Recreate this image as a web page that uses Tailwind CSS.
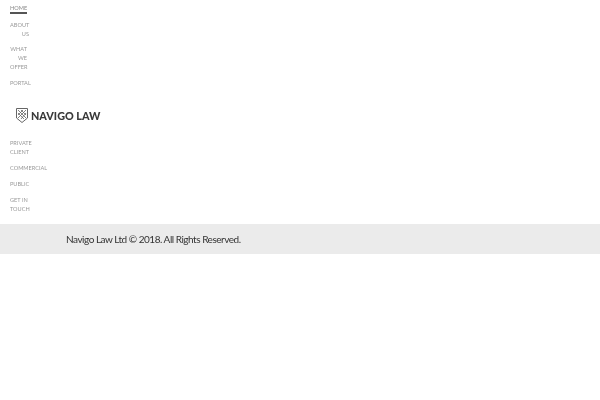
<!DOCTYPE html>
<html lang="en">
<head>
  <meta charset="UTF-8" />
  <title>Navigo Law</title>
  <script src="https://cdn.jsdelivr.net/npm/@tailwindcss/browser@4"></script>
</head>
<body class="bg-white font-['Lato',sans-serif]">
  <header class="pl-[10px] pt-[4px] [will-change:transform]">
    <ul class="flex flex-col gap-[6px] text-[5.6px] leading-[9px] text-[#999]">
      <li class="w-[17px]"><a class="block border-b-2 border-[#555] leading-[8px] text-[#888]">HOME</a></li>
      <li class="w-[19px] text-right">ABOUT<br />US</li>
      <li class="w-[17px] text-right">WHAT<br />WE<br />OFFER</li>
      <li class="mt-[1px]">PORTAL</li>
    </ul>
    <div class="flex items-center gap-[3px] ml-[6px] mt-[21px]">
      <svg width="12" height="15" viewBox="0 0 12 15" fill="none" stroke="#666">
        <path d="M.5.5h11v9.5l-5.5 4.5L.5 10z" />
        <path d="M2 2l8 8M5 2l5 5M2 5l6 6M10 2l-8 8M7 2l-5 5M10 5l-5 6" stroke-width=".8" />
      </svg>
      <span class="text-[10.8px] leading-[15px] font-black text-[#3a3a3a]">NAVIGO LAW</span>
    </div>
    <ul class="flex flex-col gap-[7px] mt-[15px] text-[5.6px] leading-[9px] text-[#999]">
      <li>PRIVATE<br />CLIENT</li>
      <li>COMMERCIAL</li>
      <li>PUBLIC</li>
      <li>GET IN<br />TOUCH</li>
    </ul>
  </header>
  <footer class="mt-[11px] h-[30px] bg-[#ebebeb] pl-[66px] pt-[1px] flex items-center">
    <p class="text-[10px] tracking-[-0.48px] text-[#333] [will-change:transform]">Navigo Law Ltd © 2018. All Rights Reserved.</p>
  </footer>
</body>
</html>
